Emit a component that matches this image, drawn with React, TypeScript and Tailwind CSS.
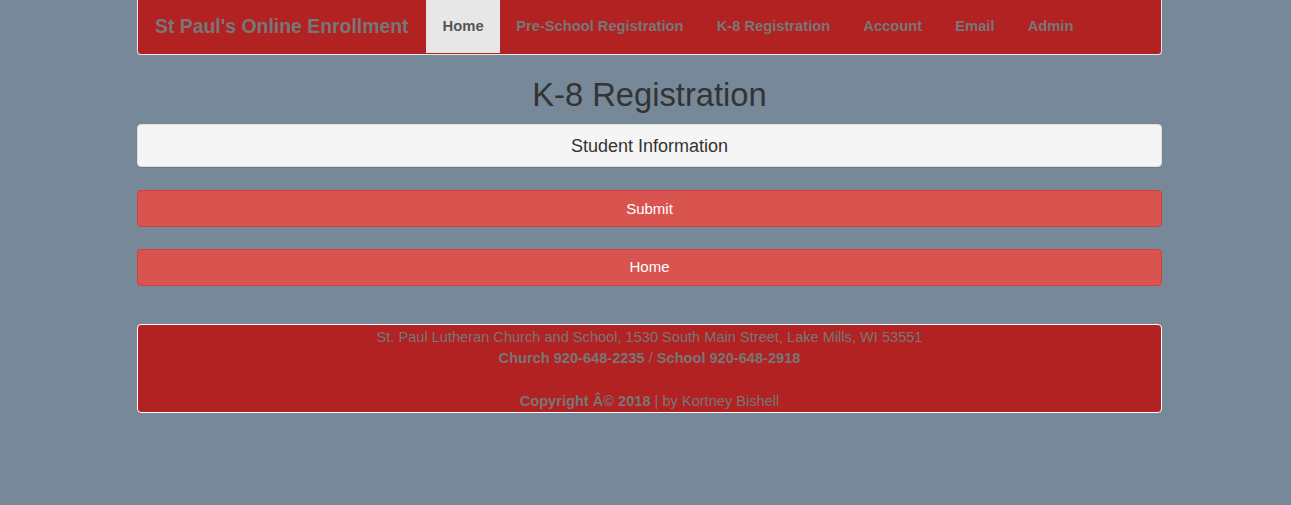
import React from "react";

export default function App() {
  const links = ["Pre-School Registration", "K-8 Registration", "Account", "Email", "Admin"];
  return (
    <div
      className="min-h-[505px] w-full bg-[#778899] text-[14px] leading-[20px] text-[#333]"
      style={{ fontFamily: '"Liberation Sans", Arial, Helvetica, sans-serif' }}
    >
      <div className="ml-[137px] w-[1025px]">
        <nav className="flex h-[55px] items-start rounded-b-[4px] border border-t-0 border-[#e7e7e7] bg-[#b22222]">
          <div className="flex h-[51px] items-center pl-[17px] pr-[17px] text-[19.4px] font-bold text-[#777]">
            St Paul's Online Enrollment
          </div>
          <div className="flex h-[53px] items-center bg-[#e7e7e7] pb-[2px] pl-[17px] pr-[16px] text-[14.8px] font-bold text-[#555]">
            Home
          </div>
          {links.map((l) => (
            <div key={l} className="flex h-[53px] items-center px-[16.6px] pb-[2px] text-[14.7px] font-bold text-[#777]">
              {l}
            </div>
          ))}
        </nav>
        <h1 className="mt-[20px] mb-[9px] text-center text-[32.7px] leading-[40px] font-normal text-[#333]">
          K-8 Registration
        </h1>
        <div className="rounded-[4px] border border-[#ddd] bg-[#f5f5f5] shadow-[0_1px_1px_rgba(0,0,0,0.1)]">
          <div className="flex h-[41px] items-center justify-center text-[18px] text-[#333]">
            Student Information
          </div>
        </div>
        <button className="mt-[23px] flex h-[37px] w-full items-center justify-center rounded-[4px] border border-[#d43f3a] bg-[#d9534f] text-[15px] text-white">
          Submit
        </button>
        <button className="mt-[22px] flex h-[37px] w-full items-center justify-center rounded-[4px] border border-[#d43f3a] bg-[#d9534f] pb-[2px] text-[15px] text-white">
          Home
        </button>
        <footer className="mt-[38px] flex h-[89px] flex-col items-center rounded-[4px] border border-white bg-[#b22222] pt-[2px] text-[14.6px] leading-[21.3px] text-[#777]">
          <div>St. Paul Lutheran Church and School, 1530 South Main Street, Lake Mills, WI 53551</div>
          <div>
            <b>Church 920-648-2235</b> / <b>School 920-648-2918</b>
          </div>
          <div>&nbsp;</div>
          <div>
            <b>Copyright Â© 2018</b> | by Kortney Bishell
          </div>
        </footer>
      </div>
    </div>
  );
}
